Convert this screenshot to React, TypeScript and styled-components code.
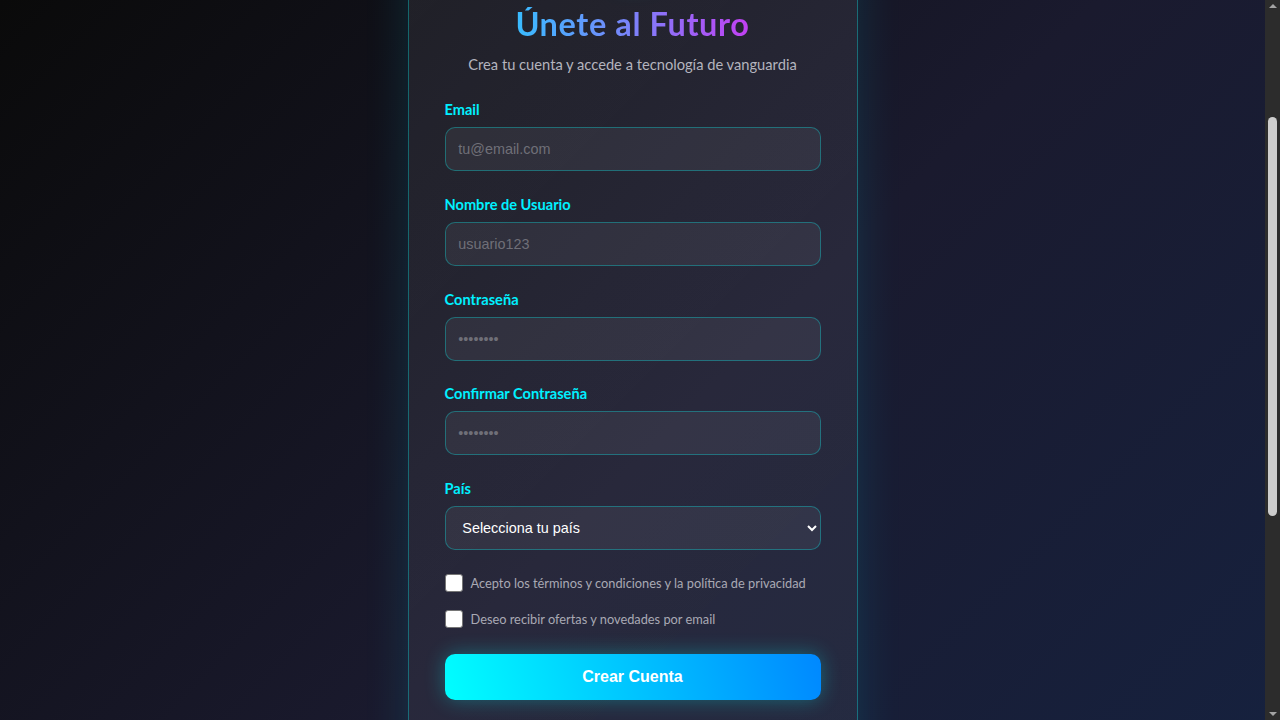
import React, { useEffect } from 'react'
import styled, { createGlobalStyle } from 'styled-components'

const GlobalStyle = createGlobalStyle`
    * {
        box-sizing: border-box;
    }
    html {
        scroll-behavior: auto;
    }
    body {
        margin: 0;
        font-family: 'Segoe UI', Lato, 'Open Sans', sans-serif;
        color: #e6e6f0;
        background: linear-gradient(135deg, #0a0a0a 0%, #1a1a2e 55%, #16213e 100%);
        background-attachment: fixed;
        min-height: 100vh;
    }
`

const Page = styled.div`
    display: flex;
    flex-direction: column;
    align-items: center;
    margin-right: 15px;
    padding: 60px 20px 100px;
`

// the window scrollbar, drawn since the headless browser hides its own
const ScrollTrack = styled.div`
    position: fixed;
    top: 0;
    right: 0;
    width: 15px;
    height: 100vh;
    background: #2c2c2c;
    display: flex;
    flex-direction: column;
    align-items: center;
    z-index: 10;
`

const Arrow = styled.div<{ $down?: boolean }>`
    width: 0;
    height: 0;
    margin-top: ${p => (p.$down ? 'auto' : '4px')};
    margin-bottom: ${p => (p.$down ? '4px' : '0')};
    border-left: 4px solid transparent;
    border-right: 4px solid transparent;
    ${p => (p.$down ? 'border-top: 4px solid #a3a3a3;' : 'border-bottom: 4px solid #a3a3a3;')}
`

const Thumb = styled.div`
    width: 9px;
    height: 399px;
    margin-top: 109px;
    border-radius: 5px;
    background: #cdcdcd;
`

const Card = styled.div`
    width: 100%;
    max-width: 450px;
    padding: 36px;
    border: 1px solid rgba(0, 255, 255, 0.32);
    border-radius: 18px;
    background: linear-gradient(135deg, rgba(255, 255, 255, 0.075), rgba(255, 255, 255, 0.055));
    box-shadow: 0 0 45px rgba(0, 220, 255, 0.14);
`

const Header = styled.div`
    display: flex;
    flex-direction: column;
    align-items: center;
    margin-bottom: 25px;
`

const Logo = styled.div`
    width: 64px;
    height: 64px;
    margin-bottom: 26px;
    border-radius: 50%;
    display: flex;
    align-items: center;
    justify-content: center;
    background: linear-gradient(135deg, #00ffff, #b44cf2);
    box-shadow: 0 0 24px rgba(0, 255, 255, 0.35);
`

const Title = styled.h1`
    margin: 0 0 12px;
    font-size: 32.5px;
    line-height: 34px;
    font-weight: 700;
    letter-spacing: 0.6px;
    background: linear-gradient(90deg, #38bcff 0%, #7c82fa 50%, #c23ff2 100%);
    -webkit-background-clip: text;
    background-clip: text;
    color: transparent;
`

const Subtitle = styled.p`
    margin: 0;
    font-size: 14.7px;
    line-height: 22px;
    color: #b4b4be;
`

const Field = styled.div`
    margin-bottom: 23.75px;
`

const Label = styled.label`
    display: block;
    margin-bottom: 7px;
    font-size: 14.6px;
    line-height: 20px;
    font-weight: 700;
    color: #00f0ff;
`

const TextInput = styled.input`
    display: block;
    width: 100%;
    height: 44px;
    padding: 0 12.8px;
    border: 1px solid rgba(0, 255, 255, 0.3);
    border-radius: 10px;
    background: rgba(255, 255, 255, 0.06);
    color: #fff;
    font-family: 'Liberation Sans', Arial, sans-serif;
    font-size: 14.4px;
    outline: none;

    &::placeholder {
        color: #6f6f78;
    }
`

const Select = styled.select`
    display: block;
    width: 100%;
    height: 44px;
    padding: 0 12.8px;
    border: 1px solid rgba(0, 255, 255, 0.3);
    border-radius: 10px;
    background: rgba(255, 255, 255, 0.06);
    color: #fff;
    font-family: 'Liberation Sans', Arial, sans-serif;
    font-size: 14.4px;
    outline: none;

    option {
        background: #1a1a2e;
        color: #fff;
    }
`

const Checks = styled.div`
    display: flex;
    flex-direction: column;
    gap: 18px;
    margin-bottom: 26px;
`

const CheckRow = styled.label`
    display: flex;
    align-items: center;
    gap: 8px;
    height: 18px;
    font-size: 12.8px;
    white-space: nowrap;
    color: #a9a9b4;
    cursor: pointer;
`

const Box = styled.input`
    appearance: none;
    flex-shrink: 0;
    width: 18px;
    height: 18px;
    margin: 0;
    border: 1px solid #767676;
    border-radius: 3px;
    background: #fff;
    cursor: pointer;
`

const Submit = styled.button`
    display: block;
    width: 100%;
    height: 46px;
    border: none;
    border-radius: 10px;
    background: linear-gradient(75deg, #00ffff 0%, #0088ff 100%);
    box-shadow: 0 0 20px rgba(0, 255, 255, 0.3);
    color: #fff;
    font-family: 'Liberation Sans', Arial, sans-serif;
    font-size: 16px;
    font-weight: 700;
    cursor: pointer;
`

const Divider = styled.div`
    display: flex;
    align-items: center;
    gap: 12px;
    margin: 24px 0;
    height: 20px;
    font-size: 13px;
    color: #8a8a96;

    &::before, &::after {
        content: '';
        flex: 1;
        height: 1px;
        background: rgba(255, 255, 255, 0.12);
    }
`

const SocialRow = styled.div`
    display: grid;
    grid-template-columns: 1fr 1fr;
    gap: 12px;
`

const SocialButton = styled.button`
    height: 44px;
    border: 1px solid rgba(0, 255, 255, 0.3);
    border-radius: 10px;
    background: rgba(255, 255, 255, 0.05);
    color: #d8d8e2;
    font-family: inherit;
    font-size: 14px;
    cursor: pointer;
`

const LoginText = styled.p`
    margin: 24px 0 0;
    text-align: center;
    font-size: 14px;
    line-height: 22px;
    color: #a9a9b4;

    a {
        color: #00f0ff;
        text-decoration: none;
        font-weight: 700;
    }
`

const Footer = styled.p`
    margin: 40px 0 0;
    font-size: 12px;
    line-height: 20px;
    color: #6a6a78;
`

const App: React.FC = () => {
    useEffect(() => {
        window.scrollTo(0, 180)
    }, [])

    return (
        <>
            <GlobalStyle />
            <Page>
                <Card>
                    <Header>
                        <Logo>
                            <svg width="30" height="30" viewBox="0 0 24 24" fill="none" stroke="#fff" strokeWidth="2" strokeLinecap="round" strokeLinejoin="round">
                                <path d="M12 2l2.5 6.5L21 11l-6.5 2.5L12 20l-2.5-6.5L3 11l6.5-2.5z" />
                            </svg>
                        </Logo>
                        <Title>Únete al Futuro</Title>
                        <Subtitle>Crea tu cuenta y accede a tecnología de vanguardia</Subtitle>
                    </Header>
                    <form onSubmit={e => e.preventDefault()}>
                        <Field>
                            <Label htmlFor="email">Email</Label>
                            <TextInput id="email" type="email" placeholder="tu@email.com" />
                        </Field>
                        <Field>
                            <Label htmlFor="username">Nombre de Usuario</Label>
                            <TextInput id="username" type="text" placeholder="usuario123" />
                        </Field>
                        <Field>
                            <Label htmlFor="password">Contraseña</Label>
                            <TextInput id="password" type="password" placeholder="••••••••" />
                        </Field>
                        <Field>
                            <Label htmlFor="confirm">Confirmar Contraseña</Label>
                            <TextInput id="confirm" type="password" placeholder="••••••••" />
                        </Field>
                        <Field>
                            <Label htmlFor="country">País</Label>
                            <Select id="country" defaultValue="">
                                <option value="">Selecciona tu país</option>
                                <option value="es">España</option>
                                <option value="mx">México</option>
                                <option value="ar">Argentina</option>
                                <option value="co">Colombia</option>
                                <option value="cl">Chile</option>
                            </Select>
                        </Field>
                        <Checks>
                            <CheckRow>
                                <Box type="checkbox" />
                                Acepto los términos y condiciones y la política de privacidad
                            </CheckRow>
                            <CheckRow>
                                <Box type="checkbox" />
                                Deseo recibir ofertas y novedades por email
                            </CheckRow>
                        </Checks>
                        <Submit type="submit">Crear Cuenta</Submit>
                    </form>
                    <Divider>o regístrate con</Divider>
                    <SocialRow>
                        <SocialButton type="button">Google</SocialButton>
                        <SocialButton type="button">GitHub</SocialButton>
                    </SocialRow>
                    <LoginText>
                        ¿Ya tienes una cuenta? <a href="#">Inicia sesión</a>
                    </LoginText>
                </Card>
                <Footer>© 2025 Futuro. Todos los derechos reservados.</Footer>
            </Page>
            <ScrollTrack>
                <Arrow />
                <Thumb />
                <Arrow $down />
            </ScrollTrack>
        </>
    )
}

export default App
